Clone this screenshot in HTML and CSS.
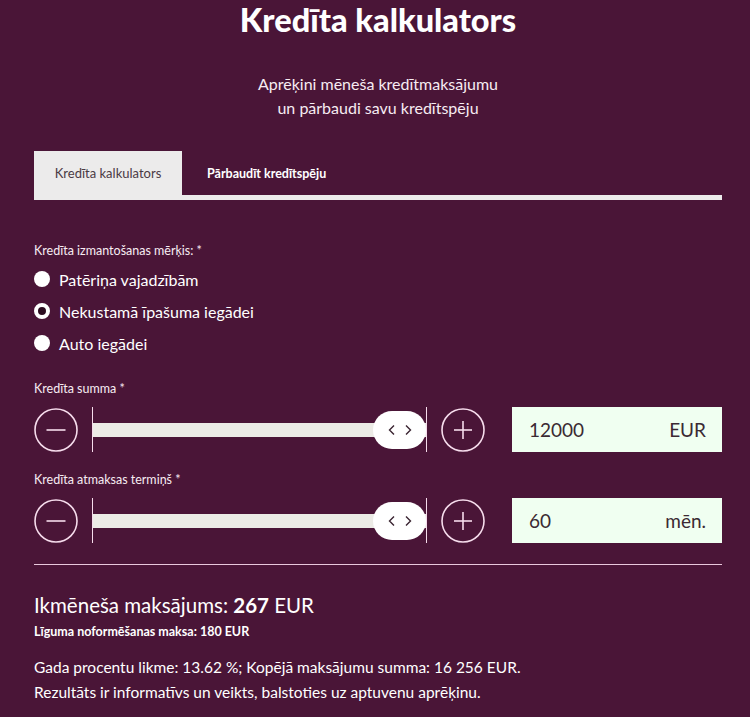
FILE: index.html
```html
<!DOCTYPE html>
<html lang="lv">
<head>
<meta charset="utf-8">
<title>Kredīta kalkulators</title>
<link rel="stylesheet" href="styles.css">
</head>
<body>
<div class="page">
  <h1 class="title">Kredīta kalkulators</h1>
  <p class="subtitle">Aprēķini mēneša kredītmaksājumu<br>un pārbaudi savu kredītspēju</p>

  <div class="tabs">
    <div class="tab tab-active">Kredīta kalkulators</div>
    <div class="tab tab-rest">Pārbaudīt kredītspēju</div>
  </div>

  <div class="label label-purpose">Kredīta izmantošanas mērķis: *</div>
  <ul class="radios">
    <li class="radio"><span class="dot"></span>Patēriņa vajadzībām</li>
    <li class="radio"><span class="dot dot-on"></span>Nekustamā īpašuma iegādei</li>
    <li class="radio"><span class="dot"></span>Auto iegādei</li>
  </ul>

  <div class="label label-sum">Kredīta summa *</div>
  <div class="slider-row">
    <button class="round-btn" aria-label="minus">
      <svg viewBox="0 0 44 44" width="44" height="44"><circle cx="22" cy="22" r="21" fill="none" stroke="#f6dcec" stroke-width="1.6"/><line x1="12.5" y1="22" x2="31.5" y2="22" stroke="#f6dcec" stroke-width="1.6"/></svg>
    </button>
    <div class="slider">
      <div class="track"></div>
      <div class="thumb">
        <svg viewBox="0 0 30 14" width="30" height="14"><polyline points="9,2.5 4.5,7 9,11.5" fill="none" stroke="#3a2431" stroke-width="1.4"/><polyline points="21,2.5 25.5,7 21,11.5" fill="none" stroke="#3a2431" stroke-width="1.4"/></svg>
      </div>
    </div>
    <button class="round-btn" aria-label="plus">
      <svg viewBox="0 0 44 44" width="44" height="44"><circle cx="22" cy="22" r="21" fill="none" stroke="#f6dcec" stroke-width="1.6"/><line x1="13" y1="22" x2="31" y2="22" stroke="#f6dcec" stroke-width="1.6"/><line x1="22" y1="13" x2="22" y2="31" stroke="#f6dcec" stroke-width="1.6"/></svg>
    </button>
    <div class="value-box"><span>12000</span><span>EUR</span></div>
  </div>

  <div class="label label-term">Kredīta atmaksas termiņš *</div>
  <div class="slider-row">
    <button class="round-btn" aria-label="minus">
      <svg viewBox="0 0 44 44" width="44" height="44"><circle cx="22" cy="22" r="21" fill="none" stroke="#f6dcec" stroke-width="1.6"/><line x1="12.5" y1="22" x2="31.5" y2="22" stroke="#f6dcec" stroke-width="1.6"/></svg>
    </button>
    <div class="slider">
      <div class="track"></div>
      <div class="thumb">
        <svg viewBox="0 0 30 14" width="30" height="14"><polyline points="9,2.5 4.5,7 9,11.5" fill="none" stroke="#3a2431" stroke-width="1.4"/><polyline points="21,2.5 25.5,7 21,11.5" fill="none" stroke="#3a2431" stroke-width="1.4"/></svg>
      </div>
    </div>
    <button class="round-btn" aria-label="plus">
      <svg viewBox="0 0 44 44" width="44" height="44"><circle cx="22" cy="22" r="21" fill="none" stroke="#f6dcec" stroke-width="1.6"/><line x1="13" y1="22" x2="31" y2="22" stroke="#f6dcec" stroke-width="1.6"/><line x1="22" y1="13" x2="22" y2="31" stroke="#f6dcec" stroke-width="1.6"/></svg>
    </button>
    <div class="value-box"><span>60</span><span>mēn.</span></div>
  </div>

  <hr class="divider">

  <div class="monthly">Ikmēneša maksājums: <b>267</b> EUR</div>
  <div class="fee">Līguma noformēšanas maksa: 180 EUR</div>
  <p class="info">Gada procentu likme: 13.62 %; Kopējā maksājumu summa: 16 256 EUR.<br>Rezultāts ir informatīvs un veikts, balstoties uz aptuvenu aprēķinu.</p>
</div>
</body>
</html>
```

FILE: styles.css
```css
html, body {
  margin: 0;
  padding: 0;
  background: #4a1537;
}

.page {
  box-sizing: border-box;
  width: 750px;
  min-height: 717px;
  padding: 0 28px 0 34px;
  background: #4a1537;
  color: #ffffff;
  font-family: Lato, "Open Sans", "DejaVu Sans", sans-serif;
  overflow: hidden;
}

.title {
  margin: 0;
  font-size: 32.5px;
  line-height: 40px;
  font-weight: 900;
  text-align: center;
  letter-spacing: 0;
}

.subtitle {
  margin: 32px 0 0;
  font-size: 16px;
  line-height: 24px;
  text-align: center;
  color: #f7ecf2;
}

.tabs {
  display: flex;
  margin-top: 31px;
  height: 49px;
}

.tab {
  box-sizing: border-box;
  height: 49px;
  display: flex;
  align-items: center;
  padding-bottom: 5px;
  font-size: 13px;
}

.tab-active {
  width: 148px;
  justify-content: center;
  background: #ecebeb;
  color: #4a3a44;
}

.tab-rest {
  flex: 1;
  padding-left: 25px;
  border-bottom: 5px solid #ecebeb;
  padding-bottom: 0;
  color: #ffffff;
  font-weight: 700;
  font-size: 12.5px;
}

.label {
  font-size: 12.5px;
  line-height: 16px;
  color: #f7ecf2;
}

.label-purpose { margin-top: 43px; }
.label-sum { margin-top: 22px; }
.label-term { margin-top: 20px; }

.radios {
  list-style: none;
  margin: 4px 0 0;
  padding: 0;
}

.radio {
  display: flex;
  align-items: center;
  height: 32px;
  font-size: 16px;
  color: #ffffff;
}

.dot {
  box-sizing: border-box;
  width: 16px;
  height: 16px;
  border-radius: 50%;
  background: #ffffff;
  margin-right: 9px;
}

.dot-on {
  background: #2c0c20;
  border: 4.5px solid #ffffff;
}

.slider-row {
  display: flex;
  align-items: center;
  height: 45px;
  margin-top: 10px;
}

.round-btn {
  width: 44px;
  height: 44px;
  padding: 0;
  border: 0;
  background: transparent;
  display: block;
  flex: none;
}

.round-btn svg { display: block; }

.slider {
  position: relative;
  box-sizing: border-box;
  width: 335px;
  height: 45px;
  margin: 0 14px;
  border-left: 1.5px solid #f6dcec;
  border-right: 1.5px solid #f6dcec;
  display: flex;
  align-items: center;
  justify-content: flex-end;
}

.track {
  position: absolute;
  left: 0;
  right: 0;
  top: 16px;
  height: 14px;
  background: #ecebe6;
}

.thumb {
  position: relative;
  width: 53px;
  height: 38px;
  border-radius: 19px;
  background: #ffffff;
  display: flex;
  align-items: center;
  justify-content: center;
}

.thumb svg { display: block; }

.value-box {
  box-sizing: border-box;
  flex: 1;
  height: 45px;
  margin-left: 27px;
  padding: 0 16px 0 17px;
  background: #f0fff1;
  color: #3b2a33;
  display: flex;
  align-items: center;
  justify-content: space-between;
  font-size: 19px;
}

.divider {
  margin: 21px 0 0;
  border: 0;
  height: 1px;
  background: #e9c8dc;
}

.monthly {
  margin-top: 28px;
  font-size: 20.5px;
  line-height: 24px;
}

.monthly b { font-weight: 700; }

.fee {
  margin-top: 7px;
  font-size: 12.5px;
  line-height: 16px;
  font-weight: 700;
}

.info {
  margin: 15px 0 0;
  font-size: 15.5px;
  line-height: 25px;
}
```
